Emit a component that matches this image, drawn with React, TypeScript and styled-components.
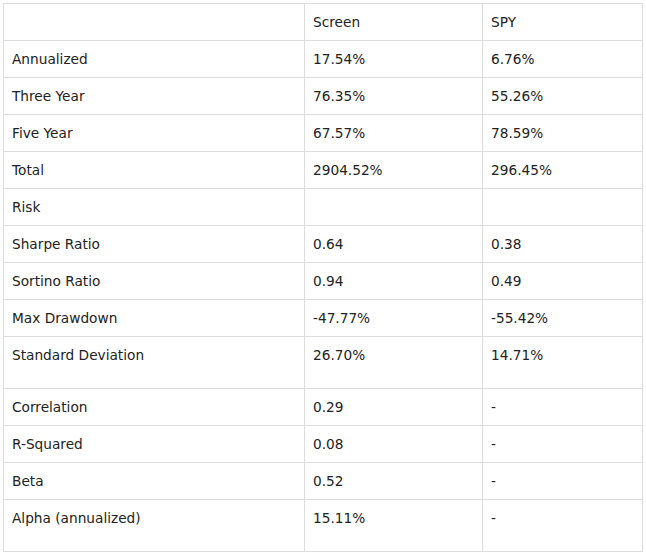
import React from "react";
import styled, { createGlobalStyle } from "styled-components";

const Global = createGlobalStyle`
  html, body { margin: 0; padding: 0; background: #fff; }
  body { font-family: "DejaVu Sans", Verdana, sans-serif; }
`;

const Wrap = styled.div`
  padding: 3px;
`;

const Table = styled.table`
  border-collapse: collapse;
  table-layout: fixed;
  width: 639px;
  font-family: "DejaVu Sans", Verdana, sans-serif;
  font-size: 13.7px;
  color: #222;
`;

const Col = styled.col<{ $w: number }>`
  width: ${(p) => p.$w}px;
`;

const Cell = styled.td<{ $tall?: boolean }>`
  border: 1px solid #dddddd;
  padding: 9px 8px ${(p) => (p.$tall ? "24px" : "9px")} 8px;
  line-height: 18px;
  vertical-align: top;
  white-space: nowrap;
  text-align: left;
`;

type Row = { label: string; screen: string; spy: string; tall?: boolean };

const rows: Row[] = [
  { label: "", screen: "Screen", spy: "SPY" },
  { label: "Annualized", screen: "17.54%", spy: "6.76%" },
  { label: "Three Year", screen: "76.35%", spy: "55.26%" },
  { label: "Five Year", screen: "67.57%", spy: "78.59%" },
  { label: "Total", screen: "2904.52%", spy: "296.45%" },
  { label: "Risk", screen: "", spy: "" },
  { label: "Sharpe Ratio", screen: "0.64", spy: "0.38" },
  { label: "Sortino Ratio", screen: "0.94", spy: "0.49" },
  { label: "Max Drawdown", screen: "-47.77%", spy: "-55.42%" },
  { label: "Standard Deviation", screen: "26.70%", spy: "14.71%", tall: true },
  { label: "Correlation", screen: "0.29", spy: "-" },
  { label: "R-Squared", screen: "0.08", spy: "-" },
  { label: "Beta", screen: "0.52", spy: "-" },
  { label: "Alpha (annualized)", screen: "15.11%", spy: "-", tall: true },
];

export default function App() {
  return (
    <>
      <Global />
      <Wrap>
        <Table>
          <colgroup>
            <Col $w={301} />
            <Col $w={178} />
            <Col $w={160} />
          </colgroup>
          <tbody>
            {rows.map((r, i) => (
              <tr key={i}>
                <Cell $tall={r.tall}>{r.label}</Cell>
                <Cell $tall={r.tall}>{r.screen}</Cell>
                <Cell $tall={r.tall}>{r.spy}</Cell>
              </tr>
            ))}
          </tbody>
        </Table>
      </Wrap>
    </>
  );
}
